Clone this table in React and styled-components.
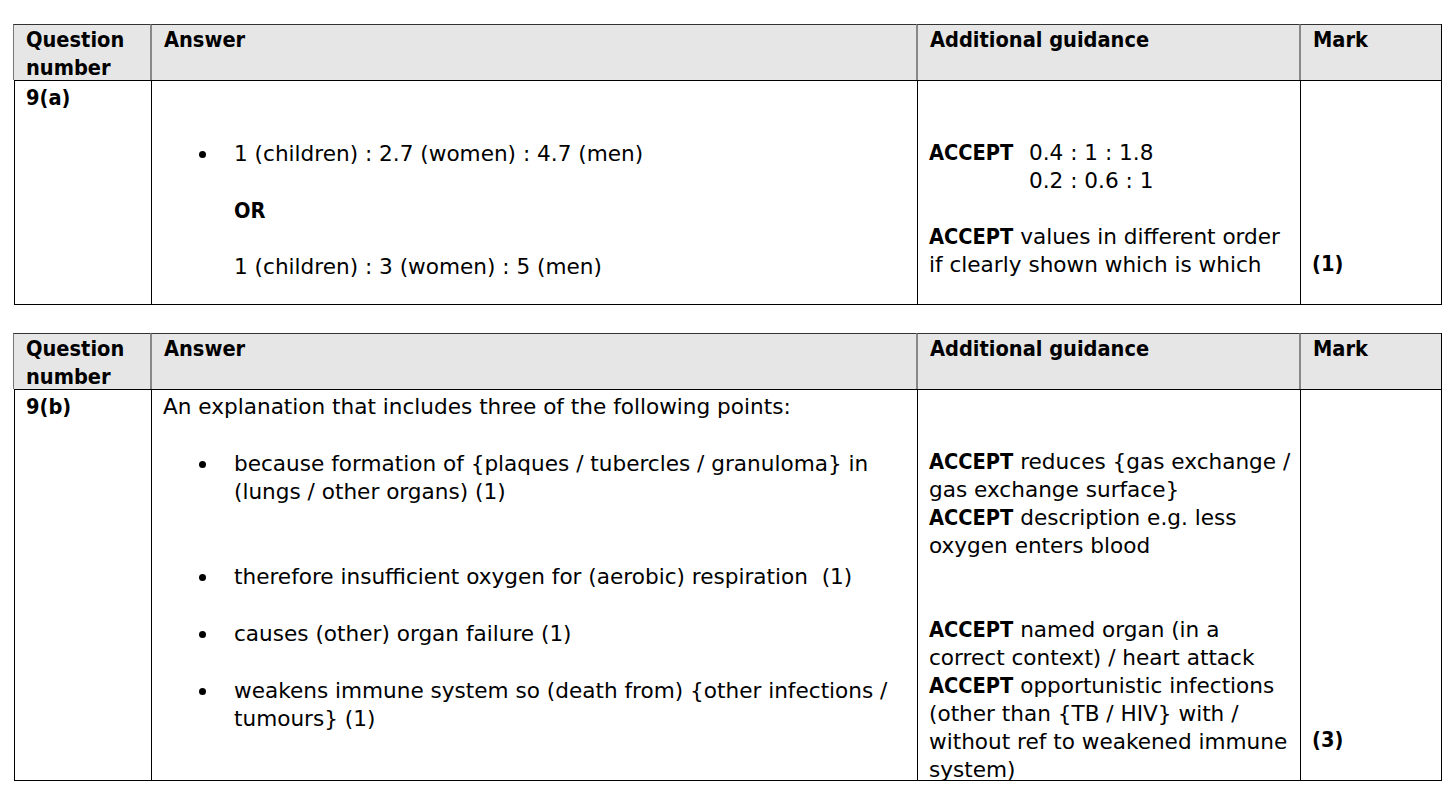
import React from "react";
import styled, { createGlobalStyle } from "styled-components";

const Global = createGlobalStyle`
  html, body { margin: 0; padding: 0; background: #fff; }
  body {
    font-family: "DejaVu Sans", sans-serif;
    font-size: 21.6px;
    line-height: 28px;
    color: #000;
  }
`;

const boldFont = `
  font-family: "DejaVu Sans Condensed", "DejaVu Sans", sans-serif;
  font-weight: bold;
`;

const Page = styled.div`
  display: flex;
  flex-direction: column;
  gap: 28px;
  padding: 24px 0 0 14px;
`;

const Table = styled.div`
  display: grid;
  grid-template-columns: 137px 766px 383px 141px;
  grid-template-rows: 56px ${(p) => p.$bodyHeight}px;
  width: 1428px;
  border-right: 1px solid #000;
  border-bottom: 1px solid #000;
  box-sizing: border-box;
`;

const HeadCell = styled.div`
  box-sizing: border-box;
  background: #e6e6e6;
  border-top: 1px solid #333;
  border-left: ${(p) => (p.$first ? "1px solid #777" : "2px solid #888")};
  margin-left: -1px;
  padding: 1px 0 0 12px;
  ${boldFont}
`;

const Cell = styled.div`
  box-sizing: border-box;
  border-top: 1px solid #000;
  border-left: 1px solid #000;
  padding: 3px 4px 0 11px;
  ${(p) => (p.$bold ? boldFont : "")}
`;

const Line = styled.div`
  margin-top: ${(p) => p.$mt || 0}px;
  padding-left: ${(p) => p.$indent || 0}px;
  ${(p) => (p.$bold ? boldFont : "")}
`;

const BulletItem = styled.div`
  display: flex;
  margin-top: ${(p) => p.$mt || 0}px;
`;

const Marker = styled.span`
  flex: 0 0 71px;
  position: relative;
  height: 28px;
  &::before {
    content: "";
    position: absolute;
    left: 36px;
    top: 11px;
    width: 7px;
    height: 7px;
    border-radius: 50%;
    background: #000;
  }
`;

const BulletText = styled.div`
  flex: 1;
  padding-right: 20px;
`;

const Strong = styled.b`
  ${boldFont}
`;

const AcceptGrid = styled.div`
  display: grid;
  grid-template-columns: 100px auto;
  margin-top: ${(p) => p.$mt || 0}px;
`;

function Header() {
  return (
    <>
      <HeadCell $first>
        Question
        <br />
        number
      </HeadCell>
      <HeadCell>Answer</HeadCell>
      <HeadCell>Additional guidance</HeadCell>
      <HeadCell>Mark</HeadCell>
    </>
  );
}

function Bullet({ mt, children }) {
  return (
    <BulletItem $mt={mt}>
      <Marker />
      <BulletText>{children}</BulletText>
    </BulletItem>
  );
}

function Accept({ mt, text }) {
  return (
    <Line $mt={mt}>
      <Strong>ACCEPT</Strong>
      <span>{text}</span>
    </Line>
  );
}

const b1 = "because formation of {plaques / tubercles / granuloma} in (lungs / other organs) (1)";
const b2 = "therefore insufficient oxygen for (aerobic) respiration\u00a0\u00a0(1)";
const b4 = "weakens immune system so (death from) {other infections / tumours} (1)";

export default function App() {
  return (
    <>
      <Global />
      <Page>
        <Table $bodyHeight={224}>
          <Header />
          <Cell $bold>9(a)</Cell>
          <Cell>
            <Bullet mt={56}>1 (children) : 2.7 (women) : 4.7 (men)</Bullet>
            <Line $mt={29} $bold $indent={71}>
              OR
            </Line>
            <Line $mt={28} $indent={71}>
              1 (children) : 3 (women) : 5 (men)
            </Line>
          </Cell>
          <Cell>
            <AcceptGrid $mt={55}>
              <Strong>ACCEPT</Strong>
              <div>
                0.4 : 1 : 1.8
                <br />
                0.2 : 0.6 : 1
              </div>
            </AcceptGrid>
            <Accept mt={28} text=" values in different order if clearly shown which is which" />
          </Cell>
          <Cell>
            <Line $mt={166} $bold>
              (1)
            </Line>
          </Cell>
        </Table>

        <Table $bodyHeight={391}>
          <Header />
          <Cell $bold>9(b)</Cell>
          <Cell>
            <Line>An explanation that includes three of the following points:</Line>
            <Bullet mt={29}>{b1}</Bullet>
            <Bullet mt={57}>{b2}</Bullet>
            <Bullet mt={29}>causes (other) organ failure (1)</Bullet>
            <Bullet mt={29}>{b4}</Bullet>
          </Cell>
          <Cell>
            <Accept mt={55} text=" reduces {gas exchange / gas exchange surface}" />
            <Accept text=" description e.g. less oxygen enters blood" />
            <Accept mt={56} text=" named organ (in a correct context) / heart attack" />
            <Accept text=" opportunistic infections (other than {TB / HIV} with / without ref to weakened immune system)" />
          </Cell>
          <Cell>
            <Line $mt={333} $bold>
              (3)
            </Line>
          </Cell>
        </Table>
      </Page>
    </>
  );
}
